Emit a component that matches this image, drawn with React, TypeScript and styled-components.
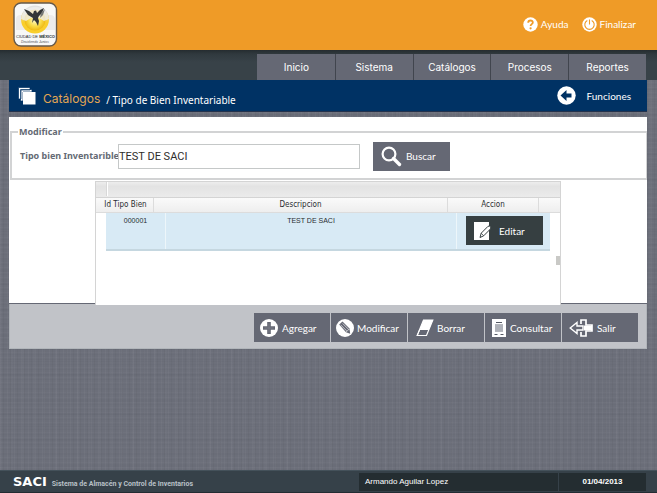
import React from "react";
import styled, { createGlobalStyle } from "styled-components";

const tahoma = `"DejaVu Sans Condensed", "DejaVu Sans", sans-serif`;
const noto = `"Noto Sans", sans-serif`;
const gothic = `Lato, "Open Sans", sans-serif`;
const wide = `Inter, "Liberation Sans", sans-serif`;
const arial = `"Liberation Sans", Arial, sans-serif`;

const GlobalStyle = createGlobalStyle`
  *, *::before, *::after { box-sizing: border-box; }
  body { margin: 0; font-family: ${tahoma}; }
  button, input { font: inherit; margin: 0; }
`;

const Page = styled.div`
  min-height: 100vh;
  display: flex;
  flex-direction: column;
  background-color: #6c6f7a;
  background-image:
    repeating-linear-gradient(90deg, rgba(255, 255, 255, 0.03) 0 1px, transparent 1px 3px, rgba(0, 0, 0, 0.03) 3px 4px, transparent 4px 7px),
    repeating-linear-gradient(0deg, rgba(255, 255, 255, 0.02) 0 1px, transparent 1px 3px, rgba(0, 0, 0, 0.02) 3px 4px, transparent 4px 5px),
    repeating-linear-gradient(90deg, rgba(255, 255, 255, 0.02) 0 2px, transparent 2px 11px),
    repeating-linear-gradient(0deg, rgba(0, 0, 0, 0.02) 0 2px, transparent 2px 13px);
`;

const Header = styled.header`
  height: 50px;
  padding: 0 21px 0 12px;
  display: flex;
  justify-content: space-between;
  align-items: flex-start;
  background: #ef9b27;
`;

const Logo = styled.svg`
  display: block;
  width: 46px;
  height: 46px;
  margin-top: 1px;
`;

const HeaderLinks = styled.div`
  display: flex;
  gap: 13px;
  padding-top: 16px;
`;

const IconLink = styled.a`
  display: flex;
  align-items: center;
  gap: 3px;
  color: #fff;
  font: 10px/16px ${gothic};
  text-decoration: none;
`;

const NavBand = styled.nav`
  height: 30px;
  padding: 4px 11px 0;
  display: flex;
  justify-content: flex-end;
  background: linear-gradient(#252c30 0, #30393e 4px, #384248 12px, #384248 100%);
`;

const NavList = styled.div`
  width: 389px;
  display: flex;
`;

const NavItem = styled.a`
  flex: 1 1 0;
  border-left: 1px solid #41454e;
  background: #656874;
  color: #fff;
  font: 10px/27px ${wide};
  text-align: center;
  text-decoration: none;
  &:first-child { border-left-color: #656874; }
`;

const Content = styled.main`
  margin: 0 10px 0 9px;
`;

const TitleBar = styled.div`
  height: 32px;
  padding: 0 16px 0 9px;
  display: flex;
  align-items: center;
  justify-content: space-between;
  border-bottom: 1px solid #24324c;
  background: #003264;
  color: #fff;
`;

const Crumbs = styled.h1`
  margin: 0;
  display: flex;
  align-items: center;
  font: 12px/16px ${tahoma};
`;

const Section = styled.span`
  margin: 6px 6px 0 7px;
  color: #e3a653;
  font: 12px/16px ${wide};
`;

const Trail = styled.span`
  margin-top: 8px;
  font: 10px/16px ${noto};
`;

const Back = styled(IconLink)`
  gap: 11px;
`;

const Panel = styled.section`
  margin-top: 5px;
  padding-top: 9px;
  border-bottom: 1px solid #656874;
  background: #fff;
`;

const Search = styled.fieldset`
  min-width: 0;
  height: 54px;
  margin: 0 0 0 1px;
  padding: 0 8px 4px;
  display: flex;
  align-items: center;
  border: 2px solid #d2d3d4;
  border-right-width: 1px;
  color: #646a74;
`;

const Legend = styled.legend`
  padding: 0 1px;
  margin-left: -2px;
  font: bold 9px/12px ${noto};
`;

const Label = styled.label`
  flex: none;
  width: 97px;
  white-space: nowrap;
  font: bold 9px/14px ${noto};
`;

const TextBox = styled.input`
  width: 242px;
  height: 25px;
  margin: 0 13px 0 1px;
  padding: 0;
  border: 1px solid #c5c8c8;
  border-radius: 0;
  background: #fff;
  color: #302d2b;
  font: 11px/14px Roboto, ${arial};
`;

const Button = styled.button<{ $dark?: boolean; $narrow?: boolean; $gap?: number; $pad?: number }>`
  width: ${(p) => (p.$narrow ? 76 : 77)}px;
  height: 29px;
  flex: none;
  padding: 0 0 0 ${(p) => p.$pad ?? 7}px;
  display: flex;
  align-items: center;
  gap: ${(p) => p.$gap ?? 4}px;
  border: 0;
  background: ${(p) => (p.$dark ? "#363f41" : "#656874")};
  color: #fff;
  font: 10px/16px ${gothic};
  text-align: left;
  white-space: nowrap;
`;

const GridFrame = styled.div`
  position: relative;
  height: 124px;
  margin: 1px 86px -2px;
  border: 1px solid #d4d4d4;
  border-bottom: 0;
  background: #fff;
`;

const GridTop = styled.div`
  height: 15px;
  padding-left: 10px;
  background: linear-gradient(#ededed, #e3e3e3 30%, #ebebeb);
  &::before {
    content: "";
    display: block;
    width: 2px;
    height: 14px;
    background: #fff;
    border-left: 1px solid #d8d8d8;
  }
`;

const Table = styled.table`
  display: block;
  font: 8px/14px ${tahoma};
  color: #292d30;
`;

const Head = styled.thead`
  display: block;
  border-top: 1px solid #d4d4d4;
  border-bottom: 1px solid #dcdcdc;
  background: linear-gradient(#fafafa, #eeeeee);
`;

const HeadRow = styled.tr`
  display: grid;
  grid-template-columns: 15px 43px 1fr 91px 21px;
`;

const HeadCell = styled.th<{ $line?: boolean }>`
  padding: 0;
  border-right: ${(p) => (p.$line ? "1px solid #dcdcdc" : "0")};
  font-weight: normal;
  line-height: 14px;
  text-align: ${(p) => (p.$line ? "center" : "right")};
  &:nth-child(2) { padding-right: 4px; }
`;

const Body = styled.tbody`
  display: block;
`;

const Row = styled.tr`
  height: 38px;
  margin: 0 10px;
  display: grid;
  grid-template-columns: 60px 1fr 93px;
  border-bottom: 2px solid #c5d7e0;
  background: #d8eaf5;
`;

const Cell = styled.td`
  padding: 0;
  border-right: 1px solid #edf6fa;
  font: 7px/16px ${arial};
  text-align: center;
  &:last-child { padding: 3px 0 0 9px; border: 0; }
`;

const Thumb = styled.span`
  position: absolute;
  right: 0;
  bottom: 40px;
  width: 4px;
  height: 9px;
  background: #c9c9c6;
`;

const Actions = styled.div`
  height: 45px;
  padding: 9px 8px 0;
  display: flex;
  justify-content: flex-end;
  gap: 1px;
  border: 1px solid #b1b5ba;
  border-top: 0;
  background: #c1c3c8;
`;

const Filler = styled.div`
  flex: 1;
`;

const StatusBar = styled.footer`
  height: 23px;
  padding: 2px 11px 1px 13px;
  display: flex;
  border-top: 1px solid #44515a;
  border-bottom: 1px solid #232c33;
  background: #364149;
  color: #fff;
`;

const Brand = styled.div`
  flex: 1;
  display: flex;
  align-items: baseline;
  gap: 5px;
  color: #b9c0c7;
  font: bold 7px/18px Roboto, sans-serif;
  strong { color: #fff; font: bold 13px/18px "DejaVu Sans", sans-serif; }
`;

const UserCell = styled.div`
  width: 199px;
  padding-left: 6px;
  background: #242d31;
  font: 8px/18px ${arial};
`;

const DateCell = styled.time`
  width: 87px;
  margin-left: 1px;
  background: #242d31;
  font: bold 8px/18px ${arial};
  text-align: center;
`;

const Svg = ({ w = 20, h = 20, children }: { w?: number; h?: number; children: React.ReactNode }) => (
  <svg width={w} height={h} viewBox={`0 0 ${w} ${h}`} fill="none" aria-hidden="true">
    {children}
  </svg>
);

const HelpIcon = () => (
  <Svg w={15} h={15}>
    <circle cx="7.5" cy="7.5" r="7.2" fill="#fff" />
    <path d="M5.2 5.8C5.2 2.7 10 2.8 9.8 5.6C9.7 7.2 7.6 7.1 7.6 9" stroke="#ef9b27" strokeWidth="1.8" />
    <circle cx="7.6" cy="11.3" r="1.1" fill="#ef9b27" />
  </Svg>
);
const PowerIcon = () => (
  <Svg w={15} h={15}>
    <circle cx="7.5" cy="7.5" r="7.2" fill="#fff" />
    <path d="M5.3 3.5A4.7 4.7 0 1 0 9.7 3.5M7.5 2.5V7.5" stroke="#ef9b27" strokeWidth="1.1" />
  </Svg>
);
const StackIcon = () => (
  <Svg w={18} h={18}>
    <path d="M.5 12V.5H12V3H3V12ZM2.5 14V2.5H14V5H5V14Z" fill="#fff" stroke="#003264" strokeWidth=".7" />
    <path d="M5 5H17.5V17.5H5Z" fill="#fff" />
  </Svg>
);
const BackIcon = () => (
  <Svg w={19} h={19}>
    <circle cx="9.5" cy="9.5" r="9.2" fill="#fff" />
    <path d="M3.5 9.5L9.5 4V7.5H14.5V11.5H9.5V15Z" fill="#003264" />
  </Svg>
);
const SearchIcon = () => (
  <Svg w={21} h={21}>
    <circle cx="8" cy="8" r="6.4" stroke="#fff" strokeWidth="2.2" />
    <path d="M12.5 12.5L18.5 18.5" stroke="#fff" strokeWidth="3.4" strokeLinecap="round" />
  </Svg>
);
const EditIcon = () => (
  <Svg w={18} h={18}>
    <path d="M0 0H15V18H0Z" fill="#fff" />
    <path d="M6 15.5L7.2 11.2L14 4.3Q15.5 3.5 16.6 5Q17.3 6 16.4 7L9.7 13.8Z" fill="#fff" stroke="#363f41" />
    <path d="M7.2 11.2L9.7 13.8" stroke="#363f41" strokeWidth=".8" />
  </Svg>
);
const PlusIcon = () => (
  <Svg w={18} h={18}>
    <circle cx="9" cy="9" r="9" fill="#fff" />
    <path d="M7.2 3H10.8V7.2H15V10.8H10.8V15H7.2V10.8H3V7.2H7.2Z" fill="#656874" />
    <path d="M9 4.5V13.5M4.5 9H13.5" stroke="#787b85" />
  </Svg>
);
const PencilIcon = () => (
  <Svg w={18} h={18}>
    <circle cx="9" cy="9" r="9" fill="#fff" />
    <path d="M3.2 5.5L6.5 2.5L13.5 9.6L14.2 14.8L10 13.2Z" fill="#656874" />
    <path d="M4.8 6L11 12.2M6.6 4.4L12.8 10.6M10.2 13L13.4 9.8" stroke="#fff" strokeWidth=".6" />
  </Svg>
);
const EraserIcon = () => (
  <Svg w={18} h={18}>
    <path d="M7.5 1H16.8L10.5 16.5H1.2Z" fill="#656874" stroke="#fff" strokeWidth="1.2" />
    <path d="M7.5 1H16.8L12.8 11H3.5Z" fill="#fff" />
    <path d="M1.2 16.5L3.8 10.5H13" stroke="#fff" />
  </Svg>
);
const DocIcon = () => (
  <Svg w={14} h={18}>
    <path d="M0 0H14V18H0Z" fill="#fff" />
    <path d="M4 3.5H10M2.5 15.5H5.5M8.5 15.5H11.5" stroke="#555a65" />
    <path d="M3 5H11V13H3Z" fill="#b6b8be" />
    <path d="M3 7H11M3 9H11M3 11H11" stroke="#a3a6ae" strokeWidth=".6" />
  </Svg>
);
const ExitIcon = () => (
  <Svg w={24} h={18}>
    <path d="M12 5V1H17V6H23V12H17V17H12V13" fill="#656874" stroke="#fff" strokeWidth="1.7" />
    <path d="M15 6.5H23V11.5H15Z" fill="#fff" />
    <path d="M1.2 9L8 3.5V7H14V11H8V14.5Z" fill="#656874" stroke="#fff" strokeWidth="1.4" />
  </Svg>
);

const CityLogo = () => (
  <Logo viewBox="0 0 46 46" role="img" aria-label="Ciudad de México">
    <defs>
      <radialGradient id="sun">
        <stop offset="0" stopColor="#fffbd0" />
        <stop offset="0.6" stopColor="#f9dc48" />
        <stop offset="1" stopColor="#efb914" />
      </radialGradient>
      <linearGradient id="ring" x2="0" y2="1">
        <stop offset="0.2" stopColor="#e0e1e1" />
        <stop offset="0.6" stopColor="#f9ce2c" />
      </linearGradient>
    </defs>
    <rect x="2" y="2" width="42.5" height="43" rx="7" fill="#f8f8f7" stroke="#665a4b" strokeWidth="1.4" />
    <path d="M4 18Q4 14 9 14H38Q43 14 43 19V29H4Z" fill="#ecebeb" />
    <circle cx="23" cy="18.5" r="14" fill="url(#ring)" />
    <circle cx="23" cy="19" r="10.5" fill="url(#sun)" />
    <path d="M9 18Q11 6 23 6T37 18L32 20L27 17H19L14 20Z" fill="#efefee" opacity=".8" />
    <path d="M12 8L17 10L21 13L22 10L24 9.5L25 12L28 9L32 7L30 12L27 15L26 17L27 20L26 25L24 21L22 19L20 22L21 17L16 14Z" fill="#333637" />
    <path d="M29 12L33 8L31 14L28 17Z" fill="#777976" />
    <text x="4" y="37" fontFamily="Liberation Sans" fontSize="4" fill="#24272b">
      CIUDAD DE <tspan fontWeight="bold">MÉXICO</tspan>
    </text>
    <text x="9" y="41.5" fontFamily="Liberation Sans" fontSize="3.4" fontStyle="italic" fill="#53545b">
      Decidiendo Juntos
    </text>
  </Logo>
);

const sections = ["Inicio", "Sistema", "Catálogos", "Procesos", "Reportes"];

const actions = [
  { label: "Agregar", icon: <PlusIcon />, pad: 6, gap: 4 },
  { label: "Modificar", icon: <PencilIcon />, pad: 5, gap: 3 },
  { label: "Borrar", icon: <EraserIcon />, pad: 8, gap: 3 },
  { label: "Consultar", icon: <DocIcon />, pad: 7, gap: 4 },
  { label: "Salir", icon: <ExitIcon />, pad: 7, gap: 4 },
];

export default function App() {
  return (
    <Page>
      <GlobalStyle />
      <Header>
        <CityLogo />
        <HeaderLinks>
          <IconLink href="#ayuda"><HelpIcon />Ayuda</IconLink>
          <IconLink href="#finalizar"><PowerIcon />Finalizar</IconLink>
        </HeaderLinks>
      </Header>
      <NavBand>
        <NavList>
          {sections.map((name) => (
            <NavItem key={name} href={`#${name}`}>{name}</NavItem>
          ))}
        </NavList>
      </NavBand>
      <Content>
        <TitleBar>
          <Crumbs>
            <StackIcon />
            <Section>Catálogos</Section>
            <Trail>/ Tipo de Bien Inventariable</Trail>
          </Crumbs>
          <Back href="#funciones"><BackIcon />Funciones</Back>
        </TitleBar>
        <Panel>
          <Search>
            <Legend>Modificar</Legend>
            <Label htmlFor="tipo">Tipo bien Inventarible</Label>
            <TextBox id="tipo" defaultValue="TEST DE SACI" />
            <Button type="button" $pad={8} $gap={4}><SearchIcon />Buscar</Button>
          </Search>
          <GridFrame>
            <GridTop />
            <Table>
              <Head>
                <HeadRow>
                  <HeadCell>Id</HeadCell>
                  <HeadCell $line>Tipo Bien</HeadCell>
                  <HeadCell $line>Descripcion</HeadCell>
                  <HeadCell $line>Accion</HeadCell>
                  <HeadCell />
                </HeadRow>
              </Head>
              <Body>
                <Row>
                  <Cell>000001</Cell>
                  <Cell>TEST DE SACI</Cell>
                  <Cell>
                    <Button type="button" $dark $gap={7} $pad={8}><EditIcon />Editar</Button>
                  </Cell>
                </Row>
              </Body>
            </Table>
            <Thumb />
          </GridFrame>
        </Panel>
        <Actions>
          {actions.map((a) => (
            <Button key={a.label} type="button" $narrow $pad={a.pad} $gap={a.gap}>{a.icon}{a.label}</Button>
          ))}
        </Actions>
      </Content>
      <Filler />
      <StatusBar>
        <Brand><strong>SACI</strong>Sistema de Almacén y Control de Inventarios</Brand>
        <UserCell>Armando Aguilar Lopez</UserCell>
        <DateCell>01/04/2013</DateCell>
      </StatusBar>
    </Page>
  );
}
